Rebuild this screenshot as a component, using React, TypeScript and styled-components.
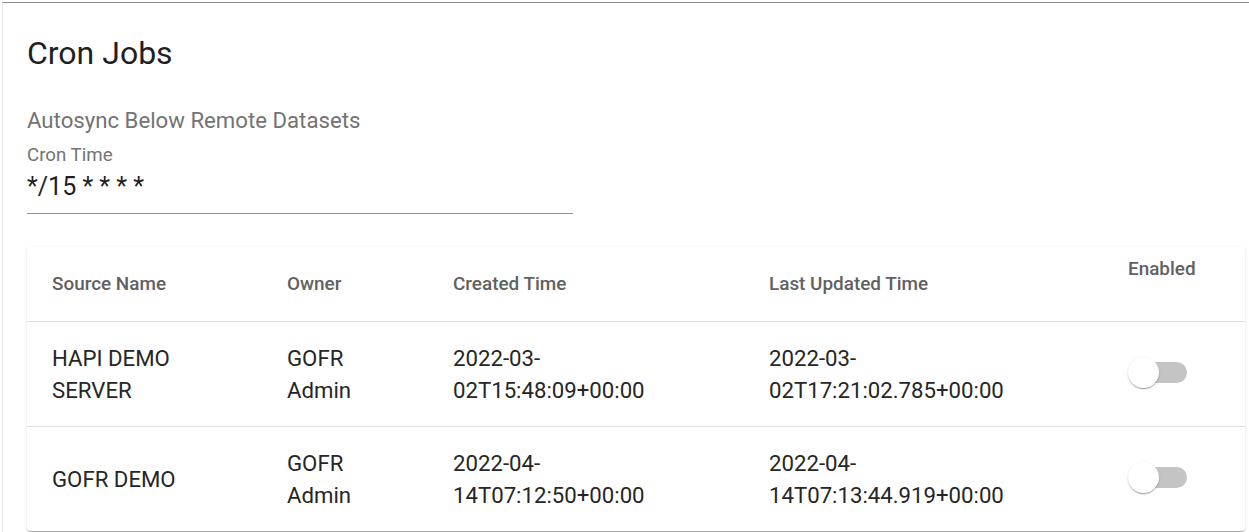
import React from "react";
import styled, { createGlobalStyle } from "styled-components";

const GlobalStyle = createGlobalStyle`
  html, body {
    margin: 0;
    padding: 0;
    background: #ffffff;
    font-family: Roboto, "Liberation Sans", Arial, sans-serif;
    overflow: hidden;
  }
`;

const Page = styled.div`
  margin: 2px 0 0 2px;
  border-top: 1px solid #8c8c8c;
  border-left: 1px solid #e8e8e8;
  padding: 31px 4px 12px 24px;
  min-height: 540px;
  box-sizing: border-box;
`;

const Title = styled.h1`
  margin: 0;
  font-size: 32px;
  line-height: 38px;
  font-weight: 400;
  color: #1f1f1f;
`;

const Subtitle = styled.div`
  margin-top: 32px;
  font-size: 22.2px;
  line-height: 32px;
  font-weight: 400;
  color: #737373;
`;

const Field = styled.div`
  width: 546px;
  margin-top: 7px;
`;

const FieldLabel = styled.div`
  font-size: 18.7px;
  line-height: 24px;
  color: #737373;
`;

const FieldValue = styled.div`
  margin-top: 4px;
  font-size: 25px;
  line-height: 32px;
  color: #1f1f1f;
  padding-bottom: 10px;
  border-bottom: 1px solid #8f8f8f;
`;

const TableCard = styled.div`
  margin-top: 33px;
  background: #fff;
  border-radius: 4px;
  box-shadow: 0 2px 1px -1px rgba(0, 0, 0, 0.2), 0 1px 1px 0 rgba(0, 0, 0, 0.14),
    0 1px 3px 0 rgba(0, 0, 0, 0.12);
  overflow: hidden;
`;

const Table = styled.table`
  width: 100%;
  border-collapse: collapse;
  table-layout: fixed;
`;

const HeadCell = styled.th<{ $top?: boolean }>`
  text-align: left;
  font-size: 18.9px;
  line-height: 26px;
  font-weight: 500;
  color: #616161;
  padding: ${(p) => (p.$top ? "9px 25px 39px" : "24px 25px")};
  vertical-align: ${(p) => (p.$top ? "top" : "middle")};
  border-bottom: 1px solid #e0e0e0;
  white-space: nowrap;
`;

const Row = styled.tr<{ $last?: boolean }>`
  & > td {
    border-bottom: ${(p) => (p.$last ? "none" : "1px solid #e0e0e0")};
  }
`;

const Cell = styled.td`
  font-size: 22.2px;
  line-height: 32px;
  font-weight: 400;
  color: #262626;
  padding: 20px 25px;
  vertical-align: middle;
`;

const SwitchRoot = styled.span`
  position: relative;
  display: inline-block;
  width: 59px;
  height: 31px;
  margin-bottom: 4px;
  vertical-align: middle;
`;

const SwitchTrack = styled.span`
  position: absolute;
  left: 8px;
  top: 5px;
  width: 51px;
  height: 21px;
  border-radius: 11px;
  background: #c4c4c4;
`;

const SwitchThumb = styled.span`
  position: absolute;
  left: 0;
  top: 0;
  width: 31px;
  height: 31px;
  border-radius: 50%;
  background: #ffffff;
  box-shadow: 0 2px 1px -1px rgba(0, 0, 0, 0.2), 0 1px 1px 0 rgba(0, 0, 0, 0.14),
    0 1px 3px 0 rgba(0, 0, 0, 0.12);
`;

const Switch = () => (
  <SwitchRoot>
    <SwitchTrack />
    <SwitchThumb />
  </SwitchRoot>
);

const rows = [
  {
    name: "HAPI DEMO SERVER",
    owner: "GOFR Admin",
    created: "2022-03-02T15:48:09+00:00",
    updated: "2022-03-02T17:21:02.785+00:00",
  },
  {
    name: "GOFR DEMO",
    owner: "GOFR Admin",
    created: "2022-04-14T07:12:50+00:00",
    updated: "2022-04-14T07:13:44.919+00:00",
  },
];

export default function App() {
  return (
    <>
      <GlobalStyle />
      <Page>
        <Title>Cron Jobs</Title>
        <Subtitle>Autosync Below Remote Datasets</Subtitle>
        <Field>
          <FieldLabel>Cron Time</FieldLabel>
          <FieldValue>*/15 * * * *</FieldValue>
        </Field>
        <TableCard>
          <Table>
            <colgroup>
              <col style={{ width: 235 }} />
              <col style={{ width: 166 }} />
              <col style={{ width: 316 }} />
              <col style={{ width: 359 }} />
              <col />
            </colgroup>
            <thead>
              <tr>
                <HeadCell>Source Name</HeadCell>
                <HeadCell>Owner</HeadCell>
                <HeadCell>Created Time</HeadCell>
                <HeadCell>Last Updated Time</HeadCell>
                <HeadCell $top>Enabled</HeadCell>
              </tr>
            </thead>
            <tbody>
              {rows.map((r, i) => (
                <Row key={r.name} $last={i === rows.length - 1}>
                  <Cell>{r.name}</Cell>
                  <Cell>{r.owner}</Cell>
                  <Cell>{r.created}</Cell>
                  <Cell>{r.updated}</Cell>
                  <Cell>
                    <Switch />
                  </Cell>
                </Row>
              ))}
            </tbody>
          </Table>
        </TableCard>
      </Page>
    </>
  );
}
